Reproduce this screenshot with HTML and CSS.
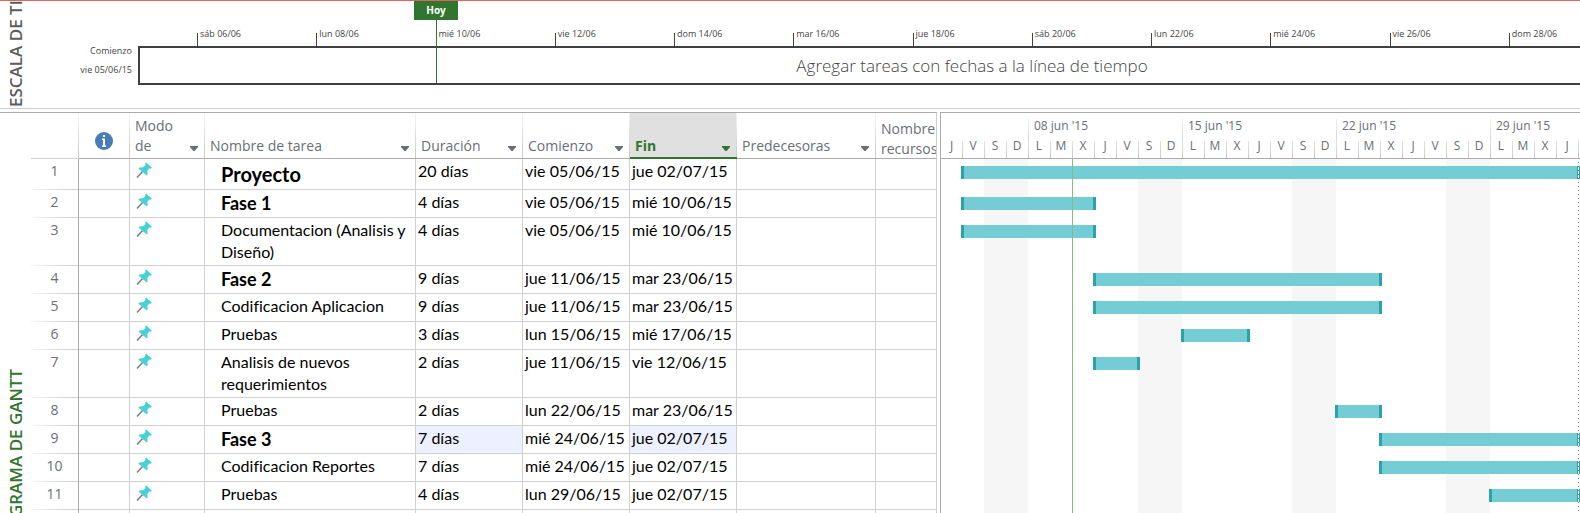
FILE: index.html
```html
<!DOCTYPE html>
<html lang="es">
<head>
<meta charset="utf-8">
<title>Proyecto - Diagrama de Gantt</title>
<link rel="stylesheet" href="styles.css">
</head>
<body>
<svg class="sprite" aria-hidden="true">
  <symbol id="pin" viewBox="0 0 16 16">
    <path d="M1 15.4 6.600 9.600" stroke="#7a7a7a" stroke-width="1.5" fill="none"/>
    <path d="M10.200.6 15.800 5.600 14.800 6.800 13.400 6.500 11.200 9 11.700 12.200 10.800 13.600 2.400 6.400 3.600 5.400 6.900 5.200 9.500 3 9.200 1.600Z" fill="#45d2d6"/>
  </symbol>
</svg>

<section class="timeline">
  <h2 class="side side-timeline">ESCALA DE TIEMPO</h2>
  <div class="start"><span>Comienzo</span><span>vie 05/06/15</span></div>
  <div class="scale">
    <div class="ticks">
      <span>sáb 06/06</span><span>lun 08/06</span><span>mié 10/06</span><span>vie 12/06</span><span>dom 14/06</span><span>mar 16/06</span><span>jue 18/06</span><span>sáb 20/06</span><span>lun 22/06</span><span>mié 24/06</span><span>vie 26/06</span><span>dom 28/06</span>
    </div>
    <div class="band">Agregar tareas con fechas a la línea de tiempo</div>
    <div class="today"><span>Hoy</span></div>
  </div>
</section>

<main class="workspace">
  <section class="sheet">
    <h2 class="side side-gantt">DIAGRAMA DE GANTT</h2>
    <table>
      <colgroup><col class="c-num"><col class="c-info"><col class="c-mode"><col class="c-name"><col class="c-date"><col class="c-date"><col class="c-date"><col class="c-pred"><col class="c-res"></colgroup>
      <thead>
        <tr>
          <th class="num"></th>
          <th class="info"><svg viewBox="0 0 18 18" role="img" aria-label="Indicadores"><circle cx="9" cy="9" r="9" fill="#4a7db3"/><path d="M8 3h2v2H8zM7 6.500h3v7h1V15H7v-1.500h1V8H7z" fill="#fff"/></svg></th>
          <th><div class="head"><span>Modo de</span><button class="drop" aria-label="Filtrar modo"></button></div></th>
          <th><div class="head"><span>Nombre de tarea</span><button class="drop" aria-label="Filtrar nombre"></button></div></th>
          <th><div class="head"><span>Duración</span><button class="drop" aria-label="Filtrar duración"></button></div></th>
          <th><div class="head"><span>Comienzo</span><button class="drop" aria-label="Filtrar comienzo"></button></div></th>
          <th class="active"><div class="head"><span>Fin</span><button class="drop" aria-label="Filtrar fin"></button></div></th>
          <th><div class="head"><span>Predecesoras</span><button class="drop" aria-label="Filtrar predecesoras"></button></div></th>
          <th class="last"><div class="head"><span>Nombre recursos</span></div></th>
        </tr>
      </thead>
      <tbody>
        <tr class="project"><th>1</th><td></td><td class="mode"><svg><use href="#pin"/></svg></td><td class="name">Proyecto</td><td>20 días</td><td>vie 05/06/15</td><td>jue 02/07/15</td><td></td><td></td></tr>
        <tr class="phase"><th>2</th><td></td><td class="mode"><svg><use href="#pin"/></svg></td><td class="name">Fase 1</td><td>4 días</td><td>vie 05/06/15</td><td>mié 10/06/15</td><td></td><td></td></tr>
        <tr class="tall"><th>3</th><td></td><td class="mode"><svg><use href="#pin"/></svg></td><td class="name">Documentacion (Analisis y Diseño)</td><td>4 días</td><td>vie 05/06/15</td><td>mié 10/06/15</td><td></td><td></td></tr>
        <tr class="phase"><th>4</th><td></td><td class="mode"><svg><use href="#pin"/></svg></td><td class="name">Fase 2</td><td>9 días</td><td>jue 11/06/15</td><td>mar 23/06/15</td><td></td><td></td></tr>
        <tr><th>5</th><td></td><td class="mode"><svg><use href="#pin"/></svg></td><td class="name">Codificacion Aplicacion</td><td>9 días</td><td>jue 11/06/15</td><td>mar 23/06/15</td><td></td><td></td></tr>
        <tr><th>6</th><td></td><td class="mode"><svg><use href="#pin"/></svg></td><td class="name">Pruebas</td><td>3 días</td><td>lun 15/06/15</td><td>mié 17/06/15</td><td></td><td></td></tr>
        <tr class="tall"><th>7</th><td></td><td class="mode"><svg><use href="#pin"/></svg></td><td class="name">Analisis de nuevos requerimientos</td><td>2 días</td><td>jue 11/06/15</td><td>vie 12/06/15</td><td></td><td></td></tr>
        <tr><th>8</th><td></td><td class="mode"><svg><use href="#pin"/></svg></td><td class="name">Pruebas</td><td>2 días</td><td>lun 22/06/15</td><td>mar 23/06/15</td><td></td><td></td></tr>
        <tr class="phase"><th>9</th><td></td><td class="mode"><svg><use href="#pin"/></svg></td><td class="name">Fase 3</td><td class="changed">7 días</td><td>mié 24/06/15</td><td class="changed">jue 02/07/15</td><td></td><td></td></tr>
        <tr><th>10</th><td></td><td class="mode"><svg><use href="#pin"/></svg></td><td class="name">Codificacion Reportes</td><td>7 días</td><td>mié 24/06/15</td><td>jue 02/07/15</td><td></td><td></td></tr>
        <tr><th>11</th><td></td><td class="mode"><svg><use href="#pin"/></svg></td><td class="name">Pruebas</td><td>4 días</td><td>lun 29/06/15</td><td>jue 02/07/15</td><td></td><td></td></tr>
        <tr><th></th><td></td><td></td><td></td><td></td><td></td><td></td><td></td><td></td></tr>
      </tbody>
    </table>
  </section>

  <section class="gantt">
    <header class="calendar">
      <div class="weeks"><span></span><span>08 jun '15</span><span>15 jun '15</span><span>22 jun '15</span><span>29 jun '15</span></div>
      <div class="days"><span>J</span><span>V</span><span>S</span><span>D</span><span>L</span><span>M</span><span>X</span><span>J</span><span>V</span><span>S</span><span>D</span><span>L</span><span>M</span><span>X</span><span>J</span><span>V</span><span>S</span><span>D</span><span>L</span><span>M</span><span>X</span><span>J</span><span>V</span><span>S</span><span>D</span><span>L</span><span>M</span><span>X</span><span>J</span><span></span></div>
    </header>
    <div class="chart">
      <div class="lane project"><i class="bar" style="grid-column: 2 / 30"></i></div>
      <div class="lane"><i class="bar" style="grid-column: 2 / 8"></i></div>
      <div class="lane tall"><i class="bar" style="grid-column: 2 / 8"></i></div>
      <div class="lane"><i class="bar" style="grid-column: 8 / 21"></i></div>
      <div class="lane"><i class="bar" style="grid-column: 8 / 21"></i></div>
      <div class="lane"><i class="bar" style="grid-column: 12 / 15"></i></div>
      <div class="lane tall"><i class="bar" style="grid-column: 8 / 10"></i></div>
      <div class="lane"><i class="bar" style="grid-column: 19 / 21"></i></div>
      <div class="lane"><i class="bar" style="grid-column: 21 / 30"></i></div>
      <div class="lane"><i class="bar" style="grid-column: 21 / 30"></i></div>
      <div class="lane"><i class="bar" style="grid-column: 26 / 30"></i></div>
      <div class="now-line"></div>
      <div class="end-line"></div>
    </div>
  </section>
</main>
</body>
</html>
```

FILE: styles.css
```css
* { box-sizing: border-box; }

body {
  margin: 0;
  height: 100vh;
  display: flex;
  flex-direction: column;
  gap: 3px;
  overflow: hidden;
  background: #fff;
  color: #444;
  font-family: "Open Sans", "Noto Sans", sans-serif;
}

.sprite { position: absolute; width: 0; height: 0; }

/* vertical view names */
.side {
  flex: none;
  width: 31px;
  margin: 0;
  overflow: hidden;
  writing-mode: vertical-rl;
  transform: rotate(180deg);
  font-size: 17px;
  font-weight: 600;
  line-height: 31px;
  white-space: nowrap;
}
.side-timeline { color: #5c5c5c; padding-top: 1px; }
.side-gantt { color: #31752f; display: flex; justify-content: flex-end; padding-bottom: 256px; }

/* timeline */
.timeline {
  flex: none;
  display: flex;
  height: 109px;
  border-top: 1px solid #e06666;
  border-bottom: 1px solid #ccc;
  overflow: hidden;
}
.start {
  flex: none;
  width: 107px;
  padding: 40px 6px 0 0;
  display: flex;
  flex-direction: column;
  align-items: flex-end;
  font-size: 9px;
  line-height: 19px;
}
.scale { position: relative; flex: 1; min-width: 0; }
.ticks {
  display: grid;
  grid-template-columns: repeat(12, minmax(0, 1fr));
  margin: 0 -48px 0 59px;
  padding-top: 32px;
}
.ticks span {
  height: 13px;
  padding-left: 2px;
  border-left: 1px solid #444;
  font-size: 9px;
  line-height: 1px;
  white-space: nowrap;
}
.band {
  height: 39px;
  margin-right: -226px;
  border: 2px solid #3f3f3f;
  text-align: center;
  font-size: 17px;
  font-weight: 300;
  line-height: 35px;
}
.today {
  position: absolute;
  top: 0;
  left: 276px;
  width: 44px;
  height: 82px;
  background: linear-gradient(#31752f, #31752f) 22px 0 / 1px 100% no-repeat;
}
.today span {
  display: block;
  background: #31752f;
  color: #fff;
  font-size: 10px;
  font-weight: 700;
  line-height: 19px;
  text-align: center;
}

/* workspace */
.workspace { flex: 1; min-height: 0; display: flex; gap: 3px; }
.sheet {
  flex: none;
  display: flex;
  border-top: 1px solid #ababab;
  border-right: 1px solid #ccc;
  overflow: hidden;
}
table {
  flex: none;
  width: 905px;
  align-self: flex-start;
  table-layout: fixed;
  border-collapse: separate;
  border-spacing: 0;
  color: #000;
  font-family: Lato, sans-serif;
  font-size: 16px;
  font-variant-ligatures: none;
  line-height: 22px;
}
.c-num { width: 48px; }
.c-info { width: 51px; }
.c-mode { width: 75px; }
.c-name { width: 211px; }
.c-date { width: 107px; }
.c-pred { width: 139px; }
.c-res { width: 60px; }

th, td {
  padding: 0;
  border-right: 1px solid #d0d0d0;
  border-bottom: 1px solid #d0d0d0;
  vertical-align: top;
  text-align: left;
  white-space: nowrap;
}
tr > :last-child { border-right: 0; }

thead th {
  height: 46px;
  padding: 0 0 2px 5px;
  border-bottom-color: #ababab;
  border-right: 0;
  background: linear-gradient(#f4f4f4, #c8c8c8) right / 1px 100% no-repeat;
  vertical-align: bottom;
  color: #6a6e75;
  font-family: "Open Sans", "Noto Sans", sans-serif;
  font-size: 14px;
  font-weight: 400;
  line-height: 20px;
}
thead .num { border-bottom-color: #d0d0d0; }
thead .info { padding: 0 2px 8px 0; }
.info svg { display: block; width: 18px; height: 18px; margin: 0 auto; }
thead .last { background: none; padding-bottom: 0; }
thead .active {
  padding-bottom: 1px;
  border-bottom: 2px solid #31752f;
  background-color: #e0e0e0;
  color: #31752f;
  font-weight: 700;
}
.head { display: flex; justify-content: space-between; align-items: flex-end; white-space: normal; }
.last .head { margin-bottom: -1px; }
.drop {
  flex: none;
  width: 8px;
  height: 5px;
  margin: 0 7px 5px 0;
  padding: 0;
  border: 0;
  color: inherit;
  background: currentColor;
  clip-path: polygon(0 0, 100% 0, 100% 20%, 58% 100%, 42% 100%, 0 20%);
}

tbody tr { height: 28px; }
tbody tr.project { height: 31px; }
tbody tr.tall { height: 48px; }
tbody th {
  border-right-color: #ababab;
  border-bottom: 0;
  background: linear-gradient(90deg, #f4f4f4, #d0d0d0 40px) bottom / 100% 1px no-repeat;
  padding-top: 1px;
  text-align: center;
  color: #6a6e75;
  font-family: "Open Sans", "Noto Sans", sans-serif;
  font-size: 14px;
  font-weight: 400;
}
tbody td { padding: 1px 0 0 2px; }
tbody .mode { padding: 3px 0 0 6px; }
.mode svg { display: block; width: 16px; height: 16px; }
tbody .name { padding-left: 16px; white-space: normal; }
.phase .name { padding-top: 2px; font-size: 18px; font-weight: 700; }
.project .name { padding-top: 4px; font-size: 20px; font-weight: 700; }
.changed { background: #edf1ff; }

/* gantt */
.gantt {
  flex: 1;
  min-width: 0;
  display: flex;
  flex-direction: column;
  border-top: 1px solid #ababab;
  border-left: 1px solid #ababab;
  overflow: hidden;
}
.calendar {
  flex: none;
  height: 46px;
  padding-top: 6px;
  border-bottom: 1px solid #ababab;
  color: #6a6e75;
  font-size: 12px;
  overflow: hidden;
}
.weeks { display: grid; grid-template-columns: 87px repeat(4, 154px); line-height: 14px; }
.weeks span { height: 22px; padding-left: 6px; background: linear-gradient(#eee, #d6d6d6) left / 1px 100% no-repeat; }
.weeks span:first-child, .days span:first-child { background: none; }
.days, .lane { display: grid; grid-template-columns: 21px repeat(29, 22px); }
.days span {
  height: 17px;
  background: linear-gradient(#e4e4e4, #c8c8c8) left / 1px 100% no-repeat;
  text-align: center;
  line-height: 10px;
}
.chart {
  position: relative;
  flex: 1;
  background: repeating-linear-gradient(90deg, transparent 0 43px, #f6f6f6 43px 87px, transparent 87px 154px);
}
.lane { height: 28px; padding-top: 7px; }
.lane.project { height: 31px; }
.lane.tall { height: 48px; }
.bar {
  height: 13px;
  margin: 0 -2px 0 -1px;
  border: solid #2ca2ad;
  border-width: 0 3px;
  background: #74ccd4;
}
.now-line { position: absolute; top: 0; bottom: 0; left: 131px; width: 1px; background: #84bd84; }
.end-line {
  position: absolute;
  top: 3px;
  bottom: 0;
  left: 637px;
  width: 1px;
  background: repeating-linear-gradient(#777 0 1px, #fff 1px 4px);
}
```
